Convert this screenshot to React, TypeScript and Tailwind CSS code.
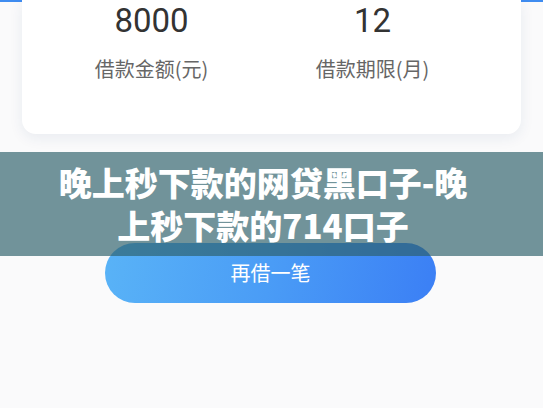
import React from "react";

const cjk = '"Noto Sans CJK SC", "Noto Sans", sans-serif';

export default function App() {
  return (
    <div
      className="relative w-[543px] h-[408px] overflow-hidden bg-[#fafafb]"
      style={{ fontFamily: cjk }}
    >
      {/* header strip peeking behind the summary card */}
      <div className="h-[2px] bg-[#3f8cf0]" />

      {/* loan summary card */}
      <div className="relative -mt-[2px] mx-[22px] h-[134px] rounded-b-[14px] bg-white shadow-[0_4px_14px_rgba(30,60,120,0.08)] pl-[19px] pr-[38px]">
        <div className="grid grid-cols-2 pt-[1px]">
          <div className="flex flex-col items-center">
            <span className="text-[33px] leading-[40px] text-[#333] font-['Roboto',sans-serif]">8000</span>
            <span className="mt-[18px] text-[20px] leading-[20px] text-[#666]">借款金额(元)</span>
          </div>
          <div className="flex flex-col items-center">
            <span className="text-[33px] leading-[40px] text-[#333] font-['Roboto',sans-serif]">12</span>
            <span className="mt-[18px] text-[20px] leading-[20px] text-[#666]">借款期限(月)</span>
          </div>
        </div>
      </div>

      {/* action button */}
      <div className="mt-[109px] flex justify-center">
        <button className="ml-[-2px] w-[331px] h-[60px] rounded-full bg-[linear-gradient(100deg,#59b3f7_0%,#4a9cf6_50%,#3b7ff5_100%)] text-white text-[20px]">
          再借一笔
        </button>
      </div>

      {/* title banner laid over the page */}
      <div className="absolute left-0 right-0 top-[152px] h-[104px] bg-[rgba(44,96,106,0.67)] flex items-center justify-center">
        <h1 className="mr-[17px] w-[420px] text-center text-white font-black text-[33px] leading-[43px]">
          晚上秒下款的网贷黑口子-晚上秒下款的714口子
        </h1>
      </div>
    </div>
  );
}
